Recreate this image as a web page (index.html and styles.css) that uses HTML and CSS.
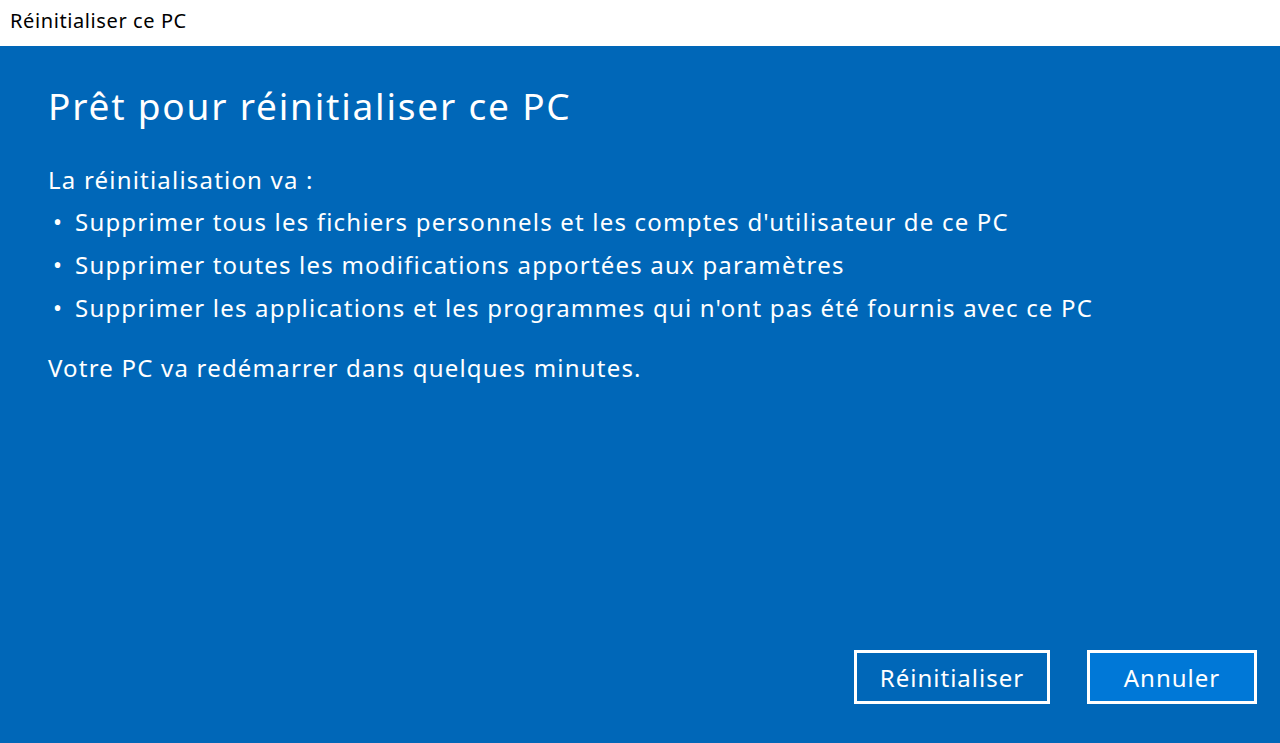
FILE: index.html
```html
<!DOCTYPE html>
<html lang="fr">
<head>
<meta charset="utf-8">
<title>Réinitialiser ce PC</title>
<link rel="stylesheet" href="styles.css">
</head>
<body>
<div class="window">
  <header class="titlebar">Réinitialiser ce PC</header>
  <main class="panel">
    <section class="content">
      <h1 class="heading">Prêt pour réinitialiser ce PC</h1>
      <p class="intro">La réinitialisation va :</p>
      <ul class="list">
        <li>Supprimer tous les fichiers personnels et les comptes d'utilisateur de ce PC</li>
        <li>Supprimer toutes les modifications apportées aux paramètres</li>
        <li>Supprimer les applications et les programmes qui n'ont pas été fournis avec ce PC</li>
      </ul>
      <p class="note">Votre PC va redémarrer dans quelques minutes.</p>
    </section>
    <footer class="actions">
      <button class="btn btn-outline">Réinitialiser</button>
      <button class="btn btn-primary">Annuler</button>
    </footer>
  </main>
</div>
</body>
</html>
```
FILE: styles.css
```css
html, body {
  margin: 0;
  padding: 0;
  height: 100%;
}
body {
  font-family: "Noto Sans", "Open Sans", sans-serif;
  overflow: hidden;
}
.window {
  display: flex;
  flex-direction: column;
  height: 743px;
  width: 1280px;
}
.titlebar {
  height: 46px;
  flex: 0 0 46px;
  background: #ffffff;
  color: #000000;
  font-size: 20px;
  letter-spacing: 0.6px;
  line-height: 42px;
  padding: 0 0 4px 10px;
  box-sizing: border-box;
}
.panel {
  flex: 1;
  background: #0067b8;
  color: #ffffff;
  display: flex;
  flex-direction: column;
  justify-content: space-between;
}
.content {
  padding: 34px 0 0 48px;
}
.heading {
  margin: 0;
  font-weight: 400;
  font-size: 37px;
  letter-spacing: 1.8px;
  line-height: 52px;
}
.intro,
.list,
.note {
  font-size: 24px;
  letter-spacing: 1.2px;
  line-height: 30px;
}
.intro {
  margin: 33px 0 0;
}
.list {
  list-style: none;
  margin: 12px 0 0;
  padding: 0;
  display: flex;
  flex-direction: column;
  gap: 13px;
}
.list li {
  position: relative;
  padding-left: 27px;
}
.list li::before {
  content: "•";
  position: absolute;
  left: 5px;
  top: 0;
  letter-spacing: 0;
}
.note {
  margin: 30px 0 0;
}
.actions {
  display: flex;
  justify-content: flex-end;
  gap: 37px;
  padding: 0 23px 39px 0;
}
.btn {
  font-family: inherit;
  font-size: 24px;
  letter-spacing: 1px;
  color: #ffffff;
  border: 3px solid #ffffff;
  height: 54px;
  padding: 0;
  box-sizing: border-box;
  cursor: pointer;
}
.btn-outline {
  background: #0067b8;
  width: 196px;
}
.btn-primary {
  background: #0078d7;
  width: 170px;
}
```
